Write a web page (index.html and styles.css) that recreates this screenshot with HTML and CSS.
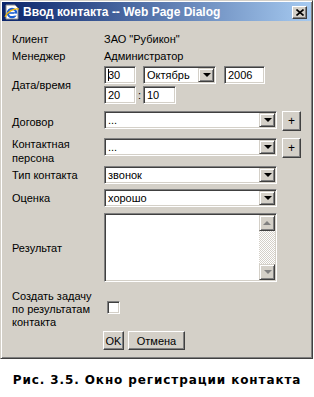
FILE: index.html
```html
<!DOCTYPE html>
<html lang="ru">
<head>
    <meta charset="UTF-8">
    <title>Ввод контакта</title>
    <link rel="stylesheet" href="styles.css">
</head>
<body>
    <div class="window">
        <div class="titlebar">
            <svg class="title-icon" width="16" height="16" viewBox="0 0 16 16">
                <path d="M2 1h9l3 3v11H2z" fill="#fff" stroke="#8a8a8a"/>
                <circle cx="8" cy="9" r="4.2" fill="none" stroke="#1c5fd0" stroke-width="2.2"/>
                <rect x="4.5" y="8.2" width="7" height="1.6" fill="#1c5fd0"/>
                <rect x="10" y="9.6" width="3" height="2" fill="#fff"/>
                <path d="M1 13c3-6 9-9 14-8" fill="none" stroke="#f0b400" stroke-width="1.2"/>
            </svg>
            <span class="title-text">Ввод контакта -- Web Page Dialog</span>
            <span class="close-btn">
                <svg width="8" height="7" viewBox="0 0 8 7">
                    <path d="M0.5 0.5l7 6M7.5 0.5l-7 6" stroke="#000" stroke-width="1.6"/>
                </svg>
            </span>
        </div>

        <div class="form">
            <div class="row row-info">
                <div class="label">Клиент</div>
                <div class="value">ЗАО "Рубикон"</div>
            </div>
            <div class="row row-info">
                <div class="label">Менеджер</div>
                <div class="value">Администратор</div>
            </div>

            <div class="row row-date">
                <div class="label">Дата/время</div>
                <div class="date-lines">
                    <div class="date-line">
                        <span class="field input w-day"><span class="caret"></span>30</span>
                        <span class="field combo w-month">
                            <span class="combo-text">Октябрь</span>
                            <span class="drop-btn"><span class="arrow-down"></span></span>
                        </span>
                        <span class="field input w-year">2006</span>
                    </div>
                    <div class="date-line">
                        <span class="field input w-day">20</span>
                        <span class="colon">:</span>
                        <span class="field input w-min">10</span>
                    </div>
                </div>
            </div>

            <div class="row row-contract">
                <div class="label">Договор</div>
                <span class="field combo w-wide">
                    <span class="combo-text">...</span>
                    <span class="drop-btn"><span class="arrow-down"></span></span>
                </span>
                <span class="btn3d btn-plus">+</span>
            </div>

            <div class="row row-person">
                <div class="label">Контактная персона</div>
                <span class="field combo w-wide">
                    <span class="combo-text">...</span>
                    <span class="drop-btn"><span class="arrow-down"></span></span>
                </span>
                <span class="btn3d btn-plus">+</span>
            </div>

            <div class="row row-type">
                <div class="label">Тип контакта</div>
                <span class="field combo w-wide">
                    <span class="combo-text">звонок</span>
                    <span class="drop-btn"><span class="arrow-down"></span></span>
                </span>
            </div>

            <div class="row row-rating">
                <div class="label">Оценка</div>
                <span class="field combo w-wide">
                    <span class="combo-text">хорошо</span>
                    <span class="drop-btn"><span class="arrow-down"></span></span>
                </span>
            </div>

            <div class="row row-result">
                <div class="label">Результат</div>
                <div class="field memo w-wide">
                    <div class="memo-body"></div>
                    <div class="scrollbar">
                        <span class="scroll-btn"><span class="arrow-up"></span></span>
                        <span class="scroll-track"></span>
                        <span class="scroll-btn"><span class="arrow-down grey"></span></span>
                    </div>
                </div>
            </div>

            <div class="row row-task">
                <div class="label label-task">Создать задачу<br>по результатам<br>контакта</div>
                <span class="field checkbox"></span>
            </div>

            <div class="row-buttons">
                <span class="btn3d btn-ok">OK</span>
                <span class="btn3d btn-cancel">Отмена</span>
            </div>
        </div>
    </div>

    <p class="caption">Рис. 3.5. Окно регистрации контакта</p>
</body>
</html>
```

FILE: styles.css
```css
* {
    box-sizing: border-box;
    margin: 0;
    padding: 0;
}

body {
    font-family: "Liberation Sans", Arial, sans-serif;
    font-size: 11px;
    color: #000;
    background: #fff;
    width: 314px;
}

/* окно диалога */
.window {
    width: 313px;
    height: 359px;
    background: #d4d0c8;
    border: 1px solid;
    border-color: #d4d0c8 #404040 #404040 #d4d0c8;
    box-shadow: inset 1px 1px #fff, inset -1px -1px #808080;
    padding: 1px;
}

.titlebar {
    height: 19px;
    display: flex;
    align-items: center;
    background: linear-gradient(to right, #0a246a, #a6caf0);
    padding-left: 2px;
}

.title-icon {
    flex: none;
    margin-right: 3px;
}

.title-text {
    flex: 1;
    color: #fff;
    font-weight: bold;
    font-size: 12px;
    white-space: nowrap;
}

.close-btn {
    width: 15px;
    height: 13px;
    margin-right: 4px;
    margin-top: 2px;
    display: flex;
    align-items: center;
    justify-content: center;
    background: #d4d0c8;
    border: 1px solid;
    border-color: #fff #404040 #404040 #fff;
    box-shadow: inset -1px -1px #808080;
}

/* форма */
.form {
    padding: 9px 0 0 10px;
}

.row {
    display: flex;
    align-items: center;
}

.label {
    width: 92px;
    flex: none;
    line-height: 14px;
}

.row-info {
    height: 17px;
}

.row-date {
    margin-top: 2px;
}

.row-contract {
    margin-top: 7px;
    align-items: flex-start;
}

.row-contract .label {
    margin-top: 4px;
}

.row-person {
    margin-top: 5px;
    align-items: flex-start;
}

.row-person .label {
    margin-top: 1px;
}

.row-person .combo,
.row-person .btn-plus {
    margin-top: 2px;
}

.row-type {
    margin-top: 1px;
}

.row-rating {
    margin-top: 5px;
}

.row-result {
    margin-top: 6px;
}

.row-task {
    margin-top: 8px;
}

.label-task {
    line-height: 13px;
}

/* поля ввода */
.field {
    background: #fff;
    border: 1px solid;
    border-color: #808080 #fff #fff #808080;
    box-shadow: inset 1px 1px #404040, inset -1px -1px #d4d0c8;
}

.input {
    height: 18px;
    display: flex;
    align-items: center;
    padding-left: 3px;
}

.caret {
    width: 1px;
    height: 12px;
    background: #000;
    margin-right: -1px;
}

.date-lines {
    display: flex;
    flex-direction: column;
    gap: 2px;
}

.date-line {
    display: flex;
    align-items: center;
}

.w-day {
    width: 32px;
}

.w-month {
    width: 73px;
    margin-left: 7px;
}

.w-year {
    width: 41px;
    margin-left: 8px;
}

.w-min {
    width: 33px;
}

.colon {
    width: 7px;
    text-align: center;
}

.w-wide {
    width: 173px;
}

.combo {
    height: 18px;
    display: flex;
    align-items: stretch;
    padding: 1px;
}

.combo-text {
    flex: 1;
    padding-left: 2px;
    display: flex;
    align-items: center;
    white-space: nowrap;
    overflow: hidden;
}

.drop-btn,
.scroll-btn {
    width: 16px;
    flex: none;
    display: flex;
    align-items: center;
    justify-content: center;
    background: #d4d0c8;
    border: 1px solid;
    border-color: #d4d0c8 #404040 #404040 #d4d0c8;
    box-shadow: inset 1px 1px #fff, inset -1px -1px #808080;
}

.arrow-down {
    width: 0;
    height: 0;
    border-left: 4px solid transparent;
    border-right: 4px solid transparent;
    border-top: 4px solid #000;
    margin-left: 1px;
}

.arrow-up {
    width: 0;
    height: 0;
    border-left: 4px solid transparent;
    border-right: 4px solid transparent;
    border-bottom: 4px solid #808080;
}

.arrow-down.grey {
    border-top-color: #808080;
}

.btn3d {
    display: flex;
    align-items: center;
    justify-content: center;
    background: #d4d0c8;
    border: 1px solid;
    border-color: #fff #404040 #404040 #fff;
    box-shadow: inset -1px -1px #808080, inset 1px 1px #d4d0c8;
}

.btn-plus {
    width: 19px;
    height: 20px;
    margin-left: 5px;
    font-size: 12px;
}

/* многострочное поле */
.memo {
    height: 69px;
    display: flex;
    padding: 1px;
}

.memo-body {
    flex: 1;
}

.scrollbar {
    width: 16px;
    display: flex;
    flex-direction: column;
}

.scroll-btn {
    height: 16px;
}

.scroll-track {
    flex: 1;
    background-image: repeating-conic-gradient(#fff 0 25%, #d4d0c8 0 50%);
    background-size: 2px 2px;
}

.checkbox {
    width: 13px;
    height: 13px;
    margin-left: 3px;
    margin-top: -4px;
}

.row-buttons {
    display: flex;
    gap: 4px;
    margin-top: 2px;
    padding-left: 91px;
}

.btn-ok,
.btn-cancel {
    height: 19px;
}

.btn-ok {
    width: 21px;
}

.btn-cancel {
    width: 57px;
}

/* подпись к рисунку */
.caption {
    margin-top: 13px;
    text-align: center;
    font-family: "DejaVu Sans", Verdana, sans-serif;
    font-weight: bold;
    font-size: 12px;
    letter-spacing: 0.9px;
    line-height: 16px;
}
```
